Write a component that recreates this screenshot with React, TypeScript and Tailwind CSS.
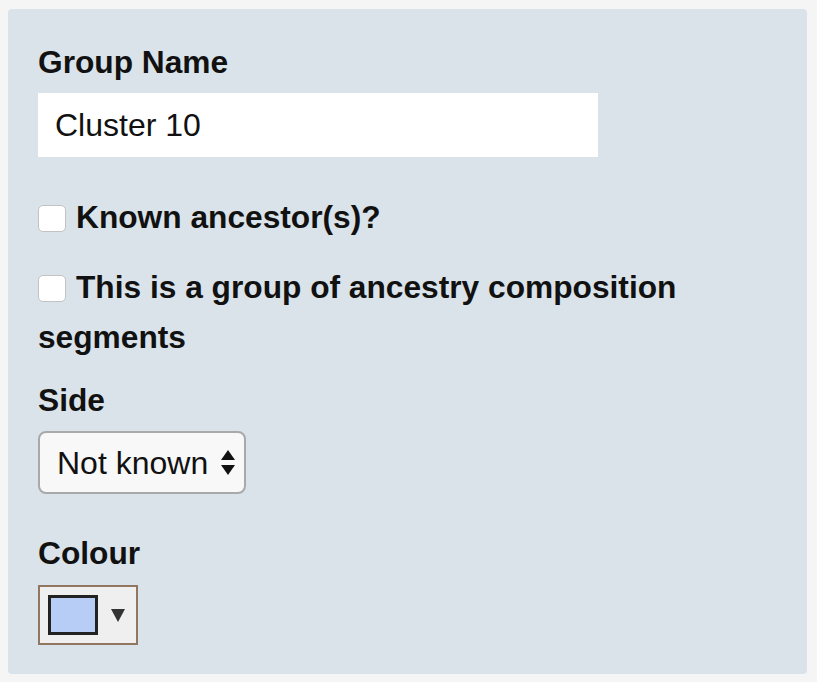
import React from "react";

const CheckBox: React.FC = () => (
  <span className="mr-[10px] inline-block h-[27px] w-[28px] rounded-[5px] border border-[#c3c3c3] bg-white align-[-4px]" />
);

const App: React.FC = () => {
  return (
    <div
      className="h-[682px] w-[817px] bg-[#f5f5f5] pl-[8px] pt-[9px]"
      style={{ fontFamily: '"Liberation Sans", Arial, sans-serif' }}
    >
      <div className="flex h-[665px] w-[799px] flex-col rounded-[4px] bg-[#d9e3e9] pl-[30px] text-[#111]">
        <label className="mt-[33px] text-[31.7px] font-bold leading-[40px]">Group Name</label>
        <div className="mt-[11px] flex h-[64px] w-[560px] items-center bg-white pl-[17px] text-[32px]">
          Cluster 10
        </div>

        <p className="mt-[35px] text-[31.7px] font-bold leading-[50px]">
          <CheckBox />
          Known ancestor(s)?
        </p>

        <p className="mt-[20px] w-[700px] text-[31.7px] font-bold leading-[50px]">
          <CheckBox />
          This is a group of ancestry composition segments
        </p>

        <label className="mt-[18px] text-[31.7px] font-bold leading-[40px]">Side</label>
        <div className="mt-[11px] flex h-[63px] w-[208px] items-center justify-between rounded-[8px] border-2 border-[#a9a9a9] bg-[#f8f8f8] pl-[17px] pr-[8px] text-[32px]">
          <span>Not known</span>
          <svg width="16" height="26" viewBox="0 0 16 26">
            <path d="M8 0 L15 10 L1 10 Z" fill="#111" />
            <path d="M1 15 L15 15 L8 25 Z" fill="#111" />
          </svg>
        </div>

        <label className="mt-[39px] text-[31.7px] font-bold leading-[40px]">Colour</label>
        <div className="mt-[12px] flex h-[60px] w-[100px] items-center border-2 border-[#927760] bg-[#efefef] pl-[8px]">
          <span className="h-[40px] w-[50px] border-[3px] border-[#222] bg-[#b8cdf5]" />
          <svg className="ml-[13px]" width="14" height="13" viewBox="0 0 14 13">
            <path d="M0 0 L14 0 L7 13 Z" fill="#333" />
          </svg>
        </div>
      </div>
    </div>
  );
};

export default App;
